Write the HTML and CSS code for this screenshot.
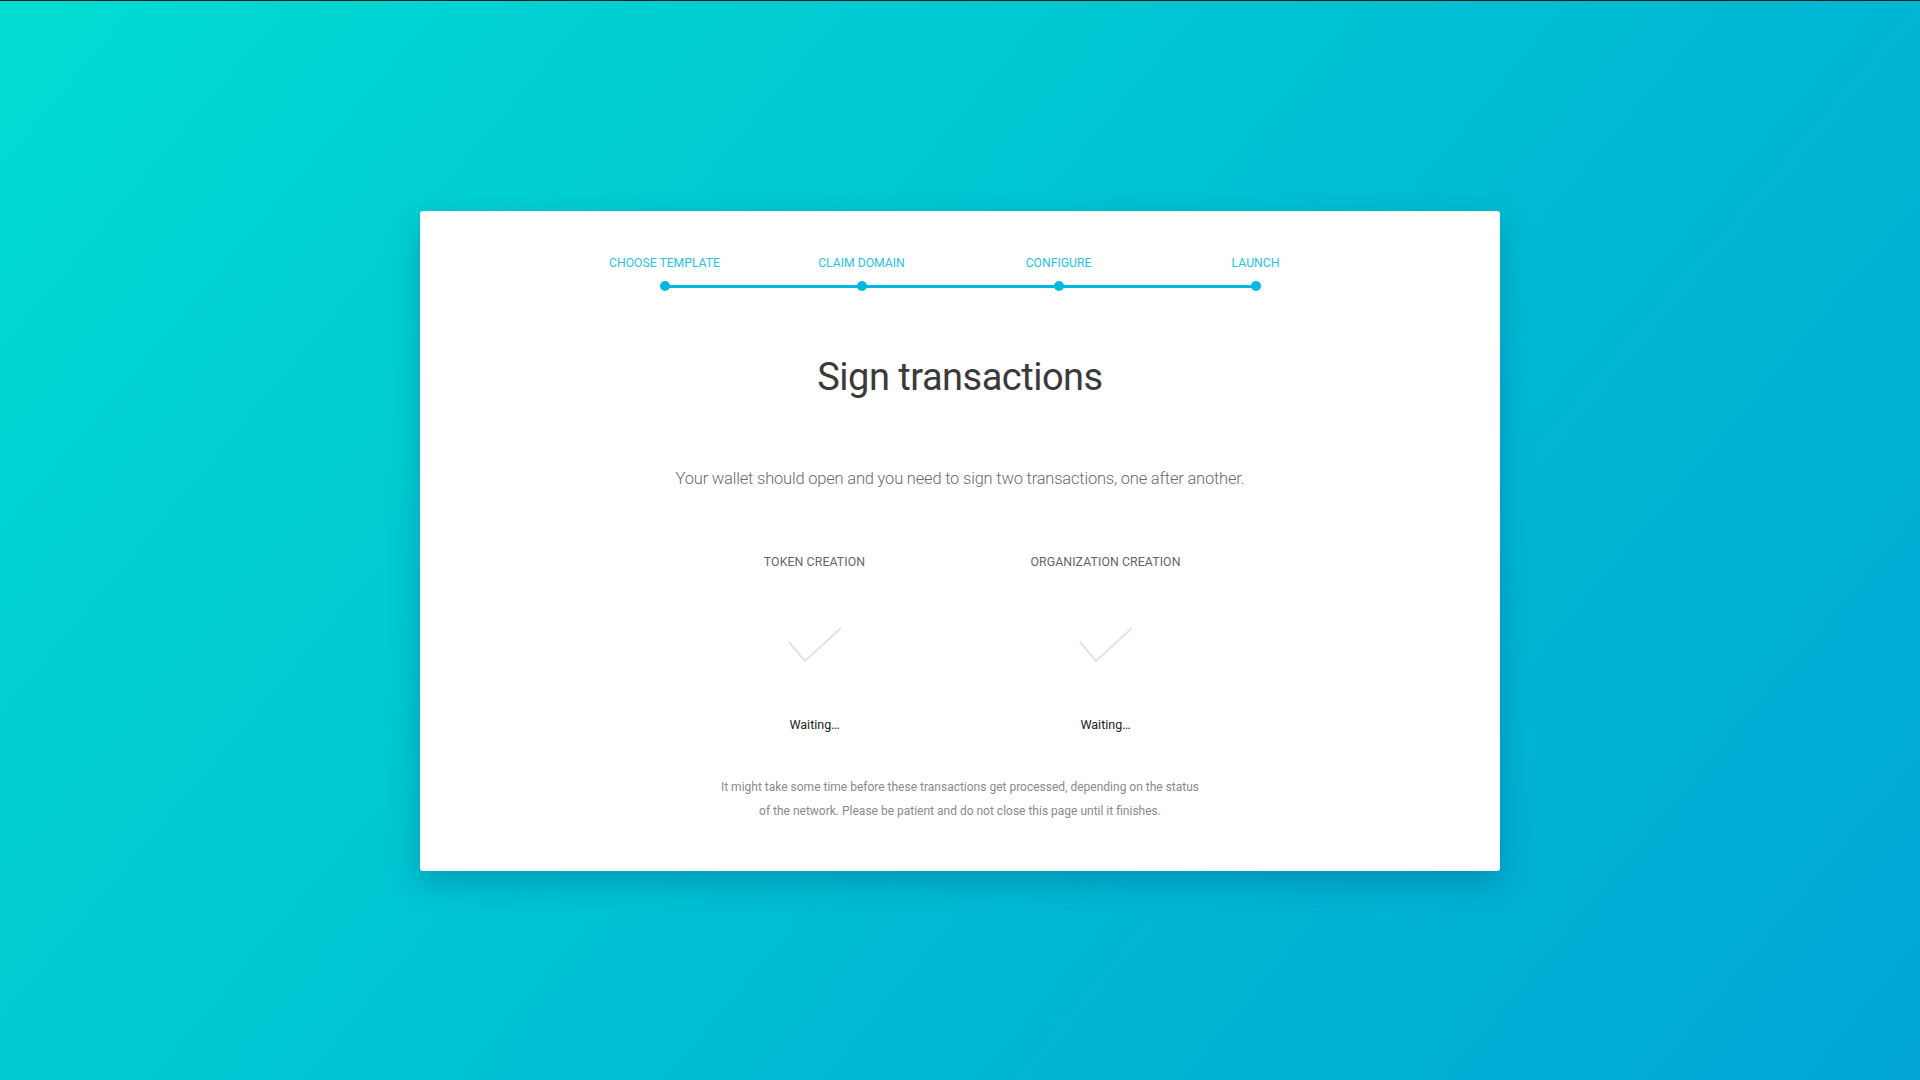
FILE: index.html
```html
<!DOCTYPE html>
<html lang="en">
<head>
<meta charset="utf-8">
<title>Sign transactions</title>
<link rel="stylesheet" href="styles.css">
</head>
<body>
<div class="screen">
  <main class="card">
    <ol class="steps">
      <li class="step"><span class="step-label">Choose template</span><span class="dot"></span></li>
      <li class="step"><span class="step-label">Claim domain</span><span class="dot"></span></li>
      <li class="step"><span class="step-label">Configure</span><span class="dot"></span></li>
      <li class="step"><span class="step-label">Launch</span><span class="dot"></span></li>
    </ol>
    <h1 class="title">Sign transactions</h1>
    <p class="lead">Your wallet should open and you need to sign two transactions, one after another.</p>
    <div class="txs">
      <div class="tx">
        <div class="tx-label">Token creation</div>
        <svg class="check" width="54" height="36" viewBox="0 0 54 36"><polyline points="1,16 17,35 53,2" fill="none" stroke="#e3e3e3" stroke-width="2"/></svg>
        <div class="tx-status">Waiting…</div>
      </div>
      <div class="tx">
        <div class="tx-label">Organization creation</div>
        <svg class="check" width="54" height="36" viewBox="0 0 54 36"><polyline points="1,16 17,35 53,2" fill="none" stroke="#e3e3e3" stroke-width="2"/></svg>
        <div class="tx-status">Waiting…</div>
      </div>
    </div>
    <p class="note">It might take some time before these transactions get processed, depending on the status of the network. Please be patient and do not close this page until it finishes.</p>
  </main>
</div>
</body>
</html>
```
FILE: styles.css
```css
html, body {
  margin: 0;
  padding: 0;
  height: 100%;
}
body {
  font-family: Roboto, "Liberation Sans", sans-serif;
  background: linear-gradient(130deg, #02dcd2 0%, #00c3d2 45%, #00a5d5 100%);
  border-top: 1px solid #1a1a1a;
  box-sizing: border-box;
}
.screen {
  height: 100%;
  display: flex;
  align-items: center;
  justify-content: center;
}
.card {
  width: 1080px;
  height: 660px;
  box-sizing: border-box;
  background: #fff;
  border-radius: 3px;
  box-shadow: 0 12px 30px rgba(0, 60, 110, 0.28);
  padding-top: 44px;
  display: flex;
  flex-direction: column;
  align-items: center;
}
.steps {
  list-style: none;
  margin: 0;
  padding: 0;
  display: grid;
  grid-template-columns: repeat(4, 197px);
  position: relative;
}
.steps::before {
  content: "";
  position: absolute;
  left: 98px;
  right: 98px;
  top: 30px;
  height: 3px;
  background: #00b8e2;
}
.step {
  display: flex;
  flex-direction: column;
  align-items: center;
}
.step-label {
  font-size: 12.2px;
  line-height: 16px;
  text-transform: uppercase;
  color: #24c4e6;
}
.dot {
  width: 10px;
  height: 10px;
  border-radius: 50%;
  background: #00b8e2;
  margin-top: 10px;
  position: relative;
}
.title {
  margin: 62px 0 0;
  font-size: 38px;
  line-height: 48px;
  font-weight: 400;
  letter-spacing: -0.5px;
  color: #3a3a3a;
}
.lead {
  margin: 66px 0 0;
  font-size: 16.5px;
  line-height: 24px;
  font-weight: 300;
  letter-spacing: -0.2px;
  color: #6b6b6b;
}
.txs {
  margin-top: 63px;
  display: flex;
  gap: 91px;
}
.tx {
  width: 200px;
  display: flex;
  flex-direction: column;
  align-items: center;
}
.tx-label {
  font-size: 12.3px;
  line-height: 16px;
  text-transform: uppercase;
  letter-spacing: 0.1px;
  color: #666;
}
.check {
  display: block;
  margin-top: 56px;
}
.tx-status {
  margin-top: 55px;
  font-size: 12.5px;
  line-height: 16px;
  color: #222;
}
.note {
  margin: 42px 0 0;
  width: 480px;
  text-align: center;
  font-size: 12px;
  line-height: 24px;
  color: #8a8a8a;
}
```
